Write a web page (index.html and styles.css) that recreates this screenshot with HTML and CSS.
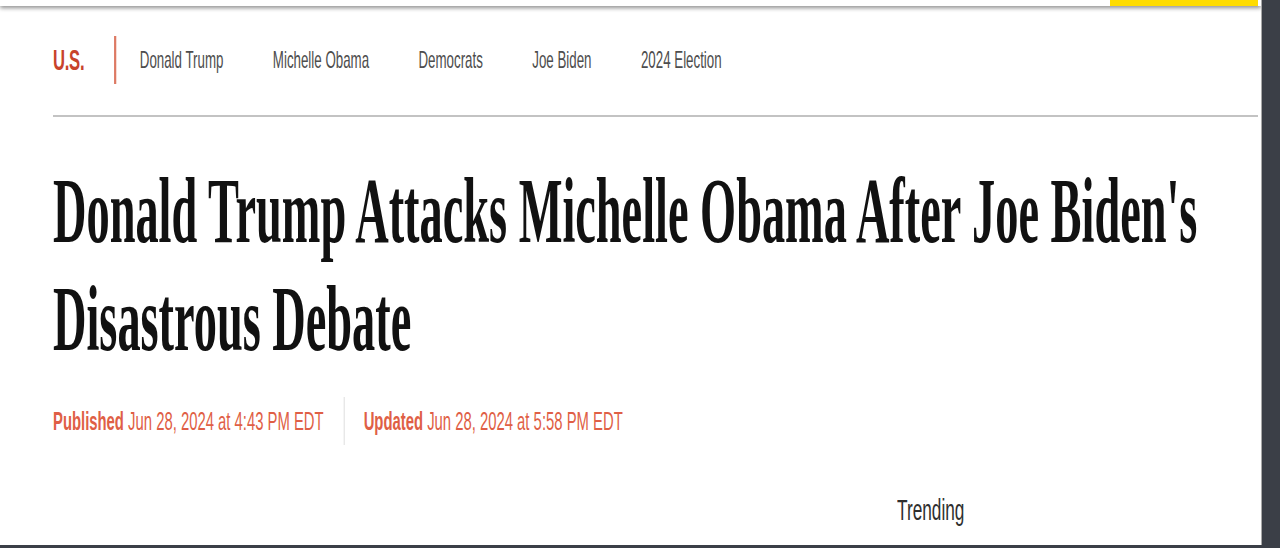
FILE: index.html
```html
<!DOCTYPE html>
<html lang="en">
<head>
<meta charset="utf-8">
<title>Donald Trump Attacks Michelle Obama After Joe Biden's Disastrous Debate</title>
<link rel="stylesheet" href="styles.css">
</head>
<body>
<div class="screen">
  <div class="page">
    <header class="topbar"><span class="promo"></span></header>
    <main class="content">
      <nav class="subnav">
        <a class="section" href="#">U.S.</a>
        <span class="divider"></span>
        <a class="tag" href="#">Donald Trump</a>
        <a class="tag" href="#">Michelle Obama</a>
        <a class="tag" href="#">Democrats</a>
        <a class="tag" href="#">Joe Biden</a>
        <a class="tag" href="#">2024 Election</a>
      </nav>
      <div class="rule"></div>
      <h1 class="headline">Donald Trump Attacks Michelle Obama After Joe Biden's Disastrous Debate</h1>
      <div class="meta">
        <span class="stamp"><b>Published</b> Jun 28, 2024 at 4:43 PM EDT</span>
        <span class="meta-sep"></span>
        <span class="stamp"><b>Updated</b> Jun 28, 2024 at 5:58 PM EDT</span>
      </div>
      <div class="lower">
        <div class="article-col"></div>
        <aside class="side-col">
          <h2 class="trending">Trending</h2>
        </aside>
      </div>
    </main>
  </div>
  <div class="dark-edge"></div>
</div>
</body>
</html>
```

FILE: styles.css
```css
html, body {
  margin: 0;
  padding: 0;
  height: 100%;
  overflow: hidden;
}

body {
  background: #3b3f47;
  font-family: "Liberation Sans", Arial, sans-serif;
}

.screen {
  display: flex;
  width: 1280px;
  height: 548px;
}

.page {
  width: 1262px;
  height: 545px;
  background: #ffffff;
  border-right: 1px solid #a9a9a9;
  box-sizing: border-box;
  overflow: hidden;
  display: flex;
  flex-direction: column;
}

.dark-edge {
  flex: 1;
  background: #3b3f47;
}

.topbar {
  height: 6px;
  flex: none;
  background: #ffffff;
  display: flex;
  justify-content: flex-end;
  box-shadow: 0 2px 4px rgba(0, 0, 0, 0.45);
  position: relative;
  z-index: 1;
}

.promo {
  width: 148px;
  margin-right: 3px;
  background: #ffdc00;
}

.content {
  padding: 30px 3px 0 53px;
}

/* sub navigation */
.subnav {
  display: flex;
  align-items: center;
  height: 48px;
  width: 200%;
  transform: scaleX(0.555);
  transform-origin: left center;
}

.subnav a {
  text-decoration: none;
  white-space: nowrap;
}

.section {
  color: #c8432b;
  font-weight: bold;
  font-size: 30px;
  letter-spacing: -0.5px;
}

.divider {
  width: 4px;
  height: 48px;
  background: #dd7a64;
  margin: 0 42px 0 54px;
}

.tag {
  color: #4d4d4d;
  font-size: 24px;
  margin-right: 89px;
}

.rule {
  height: 2px;
  background: #c3c3c3;
  margin-top: 31px;
}

/* headline */
.headline {
  margin: 39px 0 0;
  width: 205%;
  font-family: "Liberation Serif", "Times New Roman", serif;
  font-weight: bold;
  font-size: 94px;
  line-height: 108px;
  color: #111111;
  transform: scaleX(0.493);
  transform-origin: left top;
}

/* publish info */
.meta {
  display: flex;
  align-items: center;
  height: 48px;
  margin-top: 25px;
  width: 200%;
  transform: scaleX(0.571);
  transform-origin: left center;
  color: #df5f46;
  font-size: 26px;
  white-space: nowrap;
}

.meta b {
  font-weight: bold;
}

.meta-sep {
  width: 2px;
  height: 48px;
  background: #e2e2e2;
  margin: 0 33px 0 35px;
}

/* lower area */
.lower {
  display: grid;
  grid-template-columns: 844px 1fr;
  margin-top: 48px;
}

.trending {
  margin: 0;
  font-size: 30px;
  font-weight: normal;
  line-height: 34px;
  color: #2f2f2f;
  width: 200%;
  transform: scaleX(0.575);
  transform-origin: left top;
}
```
